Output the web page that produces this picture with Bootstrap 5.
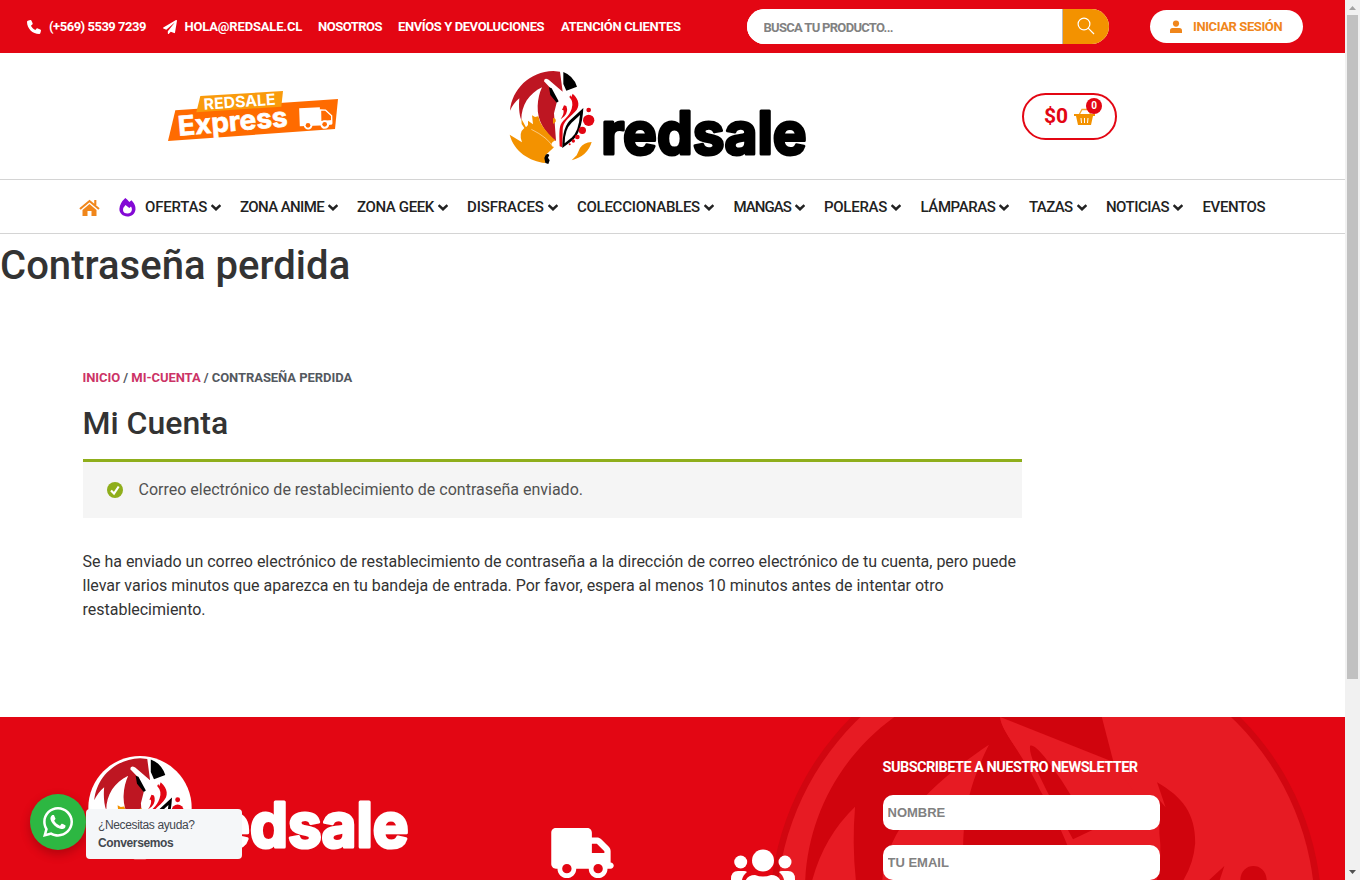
<!DOCTYPE html>
<html lang="es">
<head>
<meta charset="utf-8">
<meta name="viewport" content="width=device-width, initial-scale=1">
<title>Contraseña perdida - Redsale</title>
<link href="https://cdn.jsdelivr.net/npm/bootstrap@5.3.0/dist/css/bootstrap.min.css" rel="stylesheet">
<script src="https://cdn.jsdelivr.net/npm/bootstrap@5.3.0/dist/js/bootstrap.bundle.min.js" defer></script>
<style>
body{font-family:Roboto,"Liberation Sans",sans-serif;color:#333;height:880px;overflow:hidden;background:#fff}
.page{width:1345px;height:880px;overflow:hidden}
.rail{width:15px;height:880px;background:#f1f1f1}
.rail .thumb{width:11px;height:664px;background:#c1c1c1}
.rail svg{width:15px;height:15px;display:block}
a{text-decoration:none}
.topbar{height:53px;background:#e30613;padding-left:27px;font-size:13px;font-weight:700}
.topbar a{color:#fff;white-space:nowrap;line-height:20px}
.topbar a svg{width:14px;height:14px;fill:#fff;margin-right:8px}
.t1{width:135.5px;letter-spacing:-.48px}.t2{width:155.5px;letter-spacing:-.17px}.t3{width:80px;letter-spacing:-.5px}.t4{width:163px;letter-spacing:-.4px}.t5{width:186px;letter-spacing:-.33px}
.search{width:362px;height:35px;border-radius:18px;overflow:hidden;background:#fff}
.search .field{width:316px;border:0;border-right:1px solid #bbb;padding:2px 0 0 16.5px;font-size:13px;font-weight:700;color:#818181;letter-spacing:-.7px}
.field::placeholder,.news::placeholder{color:#818181;opacity:1}
.search button{width:46px;border:0;background:#f39200;padding:0 0 3px}
.topbar .login{width:153px;height:33px;border-radius:17px;background:#fff;color:#f0861b;margin-left:41px;padding:0 0 0 20px;letter-spacing:-.4px}
.topbar .login svg{width:12px;fill:#f0861b;margin-right:11px}
.brand{height:127px;border-bottom:1px solid #d4d4d4}
.brand svg,.col-logo svg{overflow:visible}
.cart{width:95px;height:47px;border:2px solid #e30613;border-radius:24px;color:#e30613;font-size:21px;font-weight:700;margin-top:1px}
.cart .count{width:16px;height:16px;border-radius:50%;background:#e30613;color:#fff;font-size:10px;line-height:16px;text-align:center;top:2.5px;left:62px}
.menu{height:54px;border-bottom:1px solid #d4d4d4;padding-left:79px;font-size:15px;font-weight:500}
.menu a{color:#222;white-space:nowrap;line-height:24px}
.menu .chev{width:10px;height:7px;margin-left:4px;fill:none;stroke:#222;stroke-width:2.3}
.n1{width:95px;letter-spacing:-.2px}.n2{width:117px;letter-spacing:-.6px}.n3{width:110px;letter-spacing:-.37px}.n4{width:110px;letter-spacing:-.15px}.n5{width:156.5px;letter-spacing:-.27px}.n6{width:90.5px;letter-spacing:-.95px}.n7{width:96.5px;letter-spacing:-.27px}.n8{width:108.5px;letter-spacing:-.4px}.n9{width:77px;letter-spacing:-.6px}.n10{width:96.5px;letter-spacing:-.52px}.n11{width:64px;letter-spacing:-.38px}
h1{font-size:40px;line-height:48px;font-weight:500;margin:8px 0 0;letter-spacing:.03px}
.main-col{margin:77px 0 0 82.5px;width:939.5px}
.crumbs{font-size:13px;line-height:20px;font-weight:700;color:#54595f;letter-spacing:-.06px;padding-top:1px}
.crumbs a{color:#cc3366}
h2{font-size:32px;line-height:38px;font-weight:500;margin:16px 0 17px}
.notice{border-top:3px solid #8fae1b;background:#f5f5f5;height:59px;color:#515151;padding-left:24px}
.notice svg{width:16px;height:16px;margin-right:16px}
.body-copy{margin:32px 0 0;line-height:24px;width:945px;letter-spacing:-.01px}
.foot{height:163px;background:#e30613;margin-top:95px}
.shade{top:0;left:750px;width:595px;height:163px}
.col-logo{width:551px;padding-top:23px}
.col-ico{width:331.500px}
.truck{width:63px;height:50px;margin-top:111px}
.people{width:64px;height:51px;margin:132px 0 0 116.500px}
.col-news{width:277px;padding-top:40px}
.col-news .ttl{color:#fff;font-size:14.500px;line-height:22px;font-weight:700;letter-spacing:-.52px;white-space:nowrap;margin-bottom:16px}
.news{height:35px;border:0;border-radius:10px;width:277px;font:700 13px/1 "Liberation Sans",Arial,sans-serif;padding:0 5px;margin-bottom:15px;display:block}
.wa{left:30px;top:794px}
.wa .disc{width:56px;height:56px;border-radius:50%;background:#2db742;box-shadow:0 4px 8px 1px rgba(60,0,0,.25)}
.wa .tip{width:156px;height:50px;background:#f5f7f9;border-radius:4px;margin-top:15px;padding:7px 12px;font:12px/18px "Liberation Sans",Arial,sans-serif;color:#43474e;letter-spacing:-.36px}
</style>
</head>
<body>
<svg width="0" height="0" class="position-absolute" aria-hidden="true">
<defs>
<g id="fox">
<path fill="#be1622" d="M30 152C36 88 88 35 160 33L180 35L188 95L146 59Q132 52 132 64L151 84L170 128L162 160L168 243C136 220 111 183 113 138Q114 108 126 82C87 101 64 135 64 180C57 163 56 137 58 115Q40 130 30 152Z"/>
<path fill="#f39200" d="M64 176L78 202L84 195L84 182L99 193L96 166L105 171L115 169L120 185C129 203 148 225 166 241Q145 251 162 262L137 285L136 309C89 304 42 275 29 224L66 247Q55 218 73 204L65 192Z"/>
<path fill="#f39200" d="M159 174Q169 174 167 185L159 192Z"/>
<path fill="none" stroke="#fff" stroke-width="1.5" d="M94 208Q143 232 160 262"/>
<path d="M137 284Q143 279 148 285L144 293L149 301L145 312L136 309L133 294Z"/>
<path d="M190 36Q220 47 231 80L199 92L190 72ZM147 82L155 85L176 124L170 128L151 105Z"/>
<path fill="#e30613" d="M211 106L214 111L218 101C239 119 240 141 225 155C202 179 189 184 188 211L187 262L179 259C178 227 177 207 182 194C190 177 207 171 215 146Q222 126 208 111ZM192 136L199 138Q206 155 193 169L182 178Q194 159 190 150L186 150Z"/>
<path d="M250 144Q246 220 214 244L187 264Q187 198 214 177Z"/>
<path fill="#fff" d="M240 165Q236 213 216 232L194 250Q194 208 215 188Z"/>
<g fill="#e30613"><circle cx="266" cy="150" r="7"/><circle cx="266" cy="181" r="17"/><circle cx="247" cy="211" r="11"/><circle cx="232" cy="231" r="7"/><circle cx="220" cy="243" r="5"/><circle cx="209" cy="253" r="3"/></g>
<path fill="#f39200" d="M275 246Q251 247 240 264L230 286L215 301Q263 288 275 246Z"/>
</g>
</defs>
</svg>
<div class="d-flex">
<div class="page">
  <div class="topbar d-flex align-items-center">
    <a class="t1 d-flex align-items-center" href="#"><svg viewBox="0 0 512 512"><path transform="matrix(-1 0 0 1 512 0)" d="M347.100 24.600c7.700-18.600 28-28.500 47.400-23.200l88 24C499.900 30.200 512 46 512 64c0 247.400-200.600 448-448 448c-18 0-33.800-12.100-38.600-29.500l-24-88c-5.300-19.400 4.600-39.700 23.200-47.400l96-40c16.300-6.800 35.200-2.100 46.300 11.600L207.300 368C277.700 334.700 334.700 277.700 368 207.300L318.700 167c-13.700-11.200-18.400-30-11.600-46.300l40-96z"/></svg>(+569) 5539 7239</a>
    <a class="t2 d-flex align-items-center" href="#"><svg viewBox="0 0 512 512"><path d="M476 3.200L12.500 270.600c-18.100 10.400-15.800 35.600 2.200 43.200L121 358.400l287.300-253.200c5.500-4.900 13.300 2.600 8.600 8.300L176 407v80.500c0 23.600 28.500 32.900 42.500 15.800L282 426l124.600 52.200c14.200 6 30.400-2.900 33-18.200l72-432C515 7.800 493.300-6.800 476 3.200z"/></svg>HOLA@REDSALE.CL</a>
    <a class="t3" href="#">NOSOTROS</a><a class="t4" href="#">ENVÍOS Y DEVOLUCIONES</a><a class="t5" href="#">ATENCIÓN CLIENTES</a>
    <form class="search d-flex"><input class="field" placeholder="BUSCA TU PRODUCTO..."><button type="button" aria-label="Buscar"><svg width="18" height="18" viewBox="0 0 18 18" fill="none" stroke="#fff" stroke-width="1.2"><circle cx="7" cy="7" r="5.900"/><path d="M11.200 11.200L17 17"/></svg></button></form>
    <a class="login d-flex align-items-center" href="#"><svg viewBox="0 0 12 14"><circle cx="6" cy="3.600" r="3.100"/><path d="M0 13V10.500Q0 8 2.600 8H9.400Q12 8 12 10.500V13Z"/></svg>INICIAR SESIÓN</a>
  </div>
  <header class="brand d-flex align-items-center">
    <svg width="210" height="70" viewBox="0 0 630 210" style="margin-left:150px;margin-top:-3px">
      <path fill="#ff6b00" d="M76 91L564 57L555 147L54 183Z"/><path fill="#f99b0c" d="M151 48L399 33L394 80L139 97Z"/>
      <g fill="#fff" font-family="Inter,sans-serif"><text transform="translate(162 89) rotate(-4)" font-size="46" font-weight="700" textLength="216" lengthAdjust="spacingAndGlyphs">REDSALE</text><text transform="translate(86 167) rotate(-5)" font-size="81" font-weight="700" stroke="#fff" stroke-width="2" textLength="330" lengthAdjust="spacingAndGlyphs">Express</text></g>
      <g fill="#fff" transform="rotate(-1 500 115)"><path d="M448 84L510 82L512 123L546 121L546 134L530 136L449 138Z"/><path fill="none" stroke="#fff" stroke-width="4" d="M512 90L527 91L545 108V130H512Z"/><circle cx="474" cy="135" r="13"/><circle cx="524" cy="134" r="13"/></g>
      <g fill="#ff6b00"><circle cx="474" cy="136" r="7"/><circle cx="524" cy="133" r="7"/><path d="M517 95H526L536 108L517 109Z"/></g>
    </svg>
    <svg width="320" height="115" viewBox="0 0 960 345" style="margin-left:140px;margin-top:3px"><use href="#fox"/><text x="304" y="283" font-family="Inter,sans-serif" font-weight="700" font-size="176" stroke="#000" stroke-width="9" stroke-linejoin="round" textLength="616" lengthAdjust="spacingAndGlyphs">redsale</text></svg>
    <a class="cart position-relative d-flex align-items-center" href="#" style="margin-left:202px;padding-left:20px">$0
      <svg width="21" height="18" viewBox="0 0 21 18" fill="none" style="margin-left:6px"><path d="M5 7L8 1.500H14L17 7" stroke="#f5a82e" stroke-width="1.300"/><path fill="#f39200" d="M0 6H21V8H19L17 17H4L2 8H0Z"/><path d="M7 10L7.500 15M10.500 10V15M14 10L13.500 15" stroke="#fff"/></svg>
      <span class="count position-absolute">0</span></a>
  </header>
  <nav class="menu d-flex align-items-center">
    <a href="#" style="width:40px"><svg width="21" height="18" viewBox="0 0 21 18"><path fill="#f0861b" d="M10.500 5L17.500 11V17H12.500V12H8.500V17H3.500V11Z"/><path d="M1 10L10.500 2L20 10M16.300 1V6" fill="none" stroke="#f0861b" stroke-width="2.100"/></svg></a>
    <a href="#" style="width:26px"><svg width="17" height="19" viewBox="0 0 17 19"><path fill="#8309d5" fill-rule="evenodd" d="M6.300 0Q8.500 1.700 10.300 4L12.500 2.200Q17 7 16.500 11.500C16 16 12.500 18.500 8.300 18.500S0 15.200 .4 10.800Q.8 5 6.300 0ZM6.500 7Q4 9.500 4 12C4 14.500 6 15.500 8.500 15.500S12.700 14 12.900 11.700Q13 10 12 8.500L10.300 10Z"/></svg></a>
    <a class="n1" href="#">OFERTAS<svg class="chev" viewBox="0 0 9 6"><path d="M.5 .8L4.500 4.600L8.500 .8"/></svg></a>
    <a class="n2" href="#">ZONA ANIME<svg class="chev" viewBox="0 0 9 6"><path d="M.5 .8L4.500 4.600L8.500 .8"/></svg></a>
    <a class="n3" href="#">ZONA GEEK<svg class="chev" viewBox="0 0 9 6"><path d="M.5 .8L4.500 4.600L8.500 .8"/></svg></a>
    <a class="n4" href="#">DISFRACES<svg class="chev" viewBox="0 0 9 6"><path d="M.5 .8L4.500 4.600L8.500 .8"/></svg></a>
    <a class="n5" href="#">COLECCIONABLES<svg class="chev" viewBox="0 0 9 6"><path d="M.5 .8L4.500 4.600L8.500 .8"/></svg></a>
    <a class="n6" href="#">MANGAS<svg class="chev" viewBox="0 0 9 6"><path d="M.5 .8L4.500 4.600L8.500 .8"/></svg></a>
    <a class="n7" href="#">POLERAS<svg class="chev" viewBox="0 0 9 6"><path d="M.5 .8L4.500 4.600L8.500 .8"/></svg></a>
    <a class="n8" href="#">LÁMPARAS<svg class="chev" viewBox="0 0 9 6"><path d="M.5 .8L4.500 4.600L8.500 .8"/></svg></a>
    <a class="n9" href="#">TAZAS<svg class="chev" viewBox="0 0 9 6"><path d="M.5 .8L4.500 4.600L8.500 .8"/></svg></a>
    <a class="n10" href="#">NOTICIAS<svg class="chev" viewBox="0 0 9 6"><path d="M.5 .8L4.500 4.600L8.500 .8"/></svg></a>
    <a class="n11" href="#">EVENTOS</a>
  </nav>
  <h1>Contraseña perdida</h1>
  <main class="main-col">
    <div class="crumbs"><a href="#">INICIO</a> / <a href="#">MI-CUENTA</a> / CONTRASEÑA PERDIDA</div>
    <h2>Mi Cuenta</h2>
    <div class="notice d-flex align-items-center"><svg viewBox="0 0 16 16"><circle cx="8" cy="8" r="8" fill="#8fae1b"/><path d="M4 8.500L7 11.500L11.700 4.500" fill="none" stroke="#fff" stroke-width="2.200"/></svg>Correo electrónico de restablecimiento de contraseña enviado.</div>
    <p class="body-copy">Se ha enviado un correo electrónico de restablecimiento de contraseña a la dirección de correo electrónico de tu cuenta, pero puede llevar varios minutos que aparezca en tu bandeja de entrada. Por favor, espera al menos 10 minutos antes de intentar otro restablecimiento.</p>
  </main>
  <footer class="foot position-relative overflow-hidden">
    <svg class="shade position-absolute" viewBox="0 51 1529 489" preserveAspectRatio="none">
      <ellipse cx="760" cy="639" rx="709" ry="828" fill="#d10610"/><ellipse cx="760" cy="639" rx="692" ry="810" fill="#e71b23"/>
      <g fill="#d0040d"><path d="M371 51C230 170 150 350 142 540H340C350 400 440 270 614 134C560 260 548 350 548 450V540H860L815 434C800 390 770 320 745 270C710 180 645 90 643 51Z"/>
      <path d="M1046 247C1110 290 1145 340 1144 430Q1140 490 1114 540H1045Q1060 470 1052 400V300L1068 322ZM1219 498L1180 540H1207ZM1260 540C1262 484 1325 484 1328 540Z"/></g>
      <path fill="#e71b23" d="M643 51L934 186L1000 300L830 418L768 284C740 220 643 100 643 51Z"/>
      <path fill="#d0040d" d="M643 51L934 186L904 51Z"/>
      <path fill="#d0040d" d="M720 137C735 130 770 190 800 240L880 390L830 418L768 284C740 220 715 160 720 137Z"/>
      <path fill="#e71b23" d="M270 320Q190 410 160 540H272Q262 430 270 320Z"/>
    </svg>
    <div class="d-flex position-relative">
      <div class="col-logo"><svg width="430" height="140" viewBox="0 0 1290 420"><circle cx="420" cy="203" r="155" fill="#fff"/><g transform="translate(251 20) scale(1.060)"><use href="#fox"/><text x="304" y="283" fill="#fff" stroke="#fff" stroke-width="9" stroke-linejoin="round" font-family="Inter,sans-serif" font-weight="700" font-size="176" textLength="616" lengthAdjust="spacingAndGlyphs">redsale</text></g></svg></div>
      <div class="col-ico d-flex">
        <svg class="truck" viewBox="0 0 640 512"><path fill="#fff" d="M48 0C21.500 0 0 21.500 0 48V368c0 26.500 21.500 48 48 48H64c0 53 43 96 96 96s96-43 96-96H384c0 53 43 96 96 96s96-43 96-96h32c17.700 0 32-14.300 32-32s-14.300-32-32-32V288 256 237.300c0-17-6.700-33.300-18.700-45.300L512 114.700c-12-12-28.300-18.700-45.300-18.700H416V48c0-26.500-21.500-48-48-48H48zM416 160h50.700L544 237.300V256H416V160zM112 416a48 48 0 1 1 96 0a48 48 0 1 1-96 0zm368-48a48 48 0 1 1 0 96a48 48 0 1 1 0-96z"/></svg>
        <svg class="people" viewBox="0 0 64 51" fill="#fff"><circle cx="32" cy="11.500" r="11"/><circle cx="9.700" cy="13" r="6.500"/><circle cx="54" cy="13" r="6.500"/><path d="M0 35V30Q0 22 7 22H13Q15 22 16 23Q12 26 11 31V35ZM64 35V30Q64 22 57 22H51Q49 22 48 23Q52 26 53 31V35ZM13 40Q13 26 24 26Q32 29 40 26Q51 26 51 40Z"/></svg>
      </div>
      <div class="col-news"><div class="ttl">SUBSCRIBETE A NUESTRO NEWSLETTER</div><input class="news" placeholder="NOMBRE"><input class="news" placeholder="TU EMAIL"></div>
    </div>
  </footer>
</div>
<div class="rail d-flex flex-column align-items-center"><svg viewBox="0 0 15 15"><path d="M4 10H11L7.500 6Z" fill="#a3a3a3"/></svg><div class="thumb"></div><svg class="mt-auto" viewBox="0 0 15 15"><path d="M4 5H11L7.500 9Z" fill="#505050"/></svg></div>
</div>
<div class="wa position-fixed d-flex">
  <div class="disc d-flex align-items-center justify-content-center"><svg width="30" height="30" viewBox="0 0 448 448" fill="#fff"><path d="M380.900 65.100C339 23.100 283.200 0 223.900 0 101.500 0 1.900 99.600 1.900 222c0 39.100 10.200 77.300 29.600 111L0 448l117.700-30.900c32.400 17.700 68.900 27 106.100 27h.1c122.300 0 224.100-99.600 224.100-222 0-59.300-25.200-115-67.100-157zm-157 341.600c-33.200 0-65.700-8.900-94-25.700l-6.700-4-69.800 18.300L72 327.200l-4.400-7c-18.500-29.400-28.200-63.300-28.200-98.200 0-101.700 82.800-184.500 184.600-184.500 49.300 0 95.600 19.200 130.400 54.100 34.800 34.900 56.200 81.200 56.100 130.500 0 101.800-84.900 184.600-186.600 184.600z"/><path d="M325.100 268.500c-5.500-2.800-32.800-16.200-37.900-18-5.100-1.900-8.800-2.800-12.500 2.800-3.700 5.600-14.300 18-17.600 21.800-3.200 3.700-6.500 4.200-12 1.400-32.600-16.300-54-29.100-75.500-66-5.700-9.800 5.700-9.100 16.300-30.300 1.800-3.700.9-6.900-.5-9.700-1.400-2.800-12.500-30.100-17.100-41.200-4.500-10.800-9.100-9.300-12.500-9.500-3.200-.2-6.900-.2-10.600-.2-3.700 0-9.700 1.400-14.800 6.900-5.100 5.600-19.400 19-19.400 46.300 0 27.300 19.900 53.700 22.600 57.400 2.800 3.700 39.100 59.700 94.800 83.800 35.200 15.200 49 16.500 66.600 13.900 10.700-1.600 32.800-13.400 37.400-26.400 4.600-13 4.600-24.100 3.200-26.400-1.300-2.500-5-3.900-10.500-6.600z"/></svg></div>
  <div class="tip">¿Necesitas ayuda?<br><b>Conversemos</b></div>
</div>
</body>
</html>
